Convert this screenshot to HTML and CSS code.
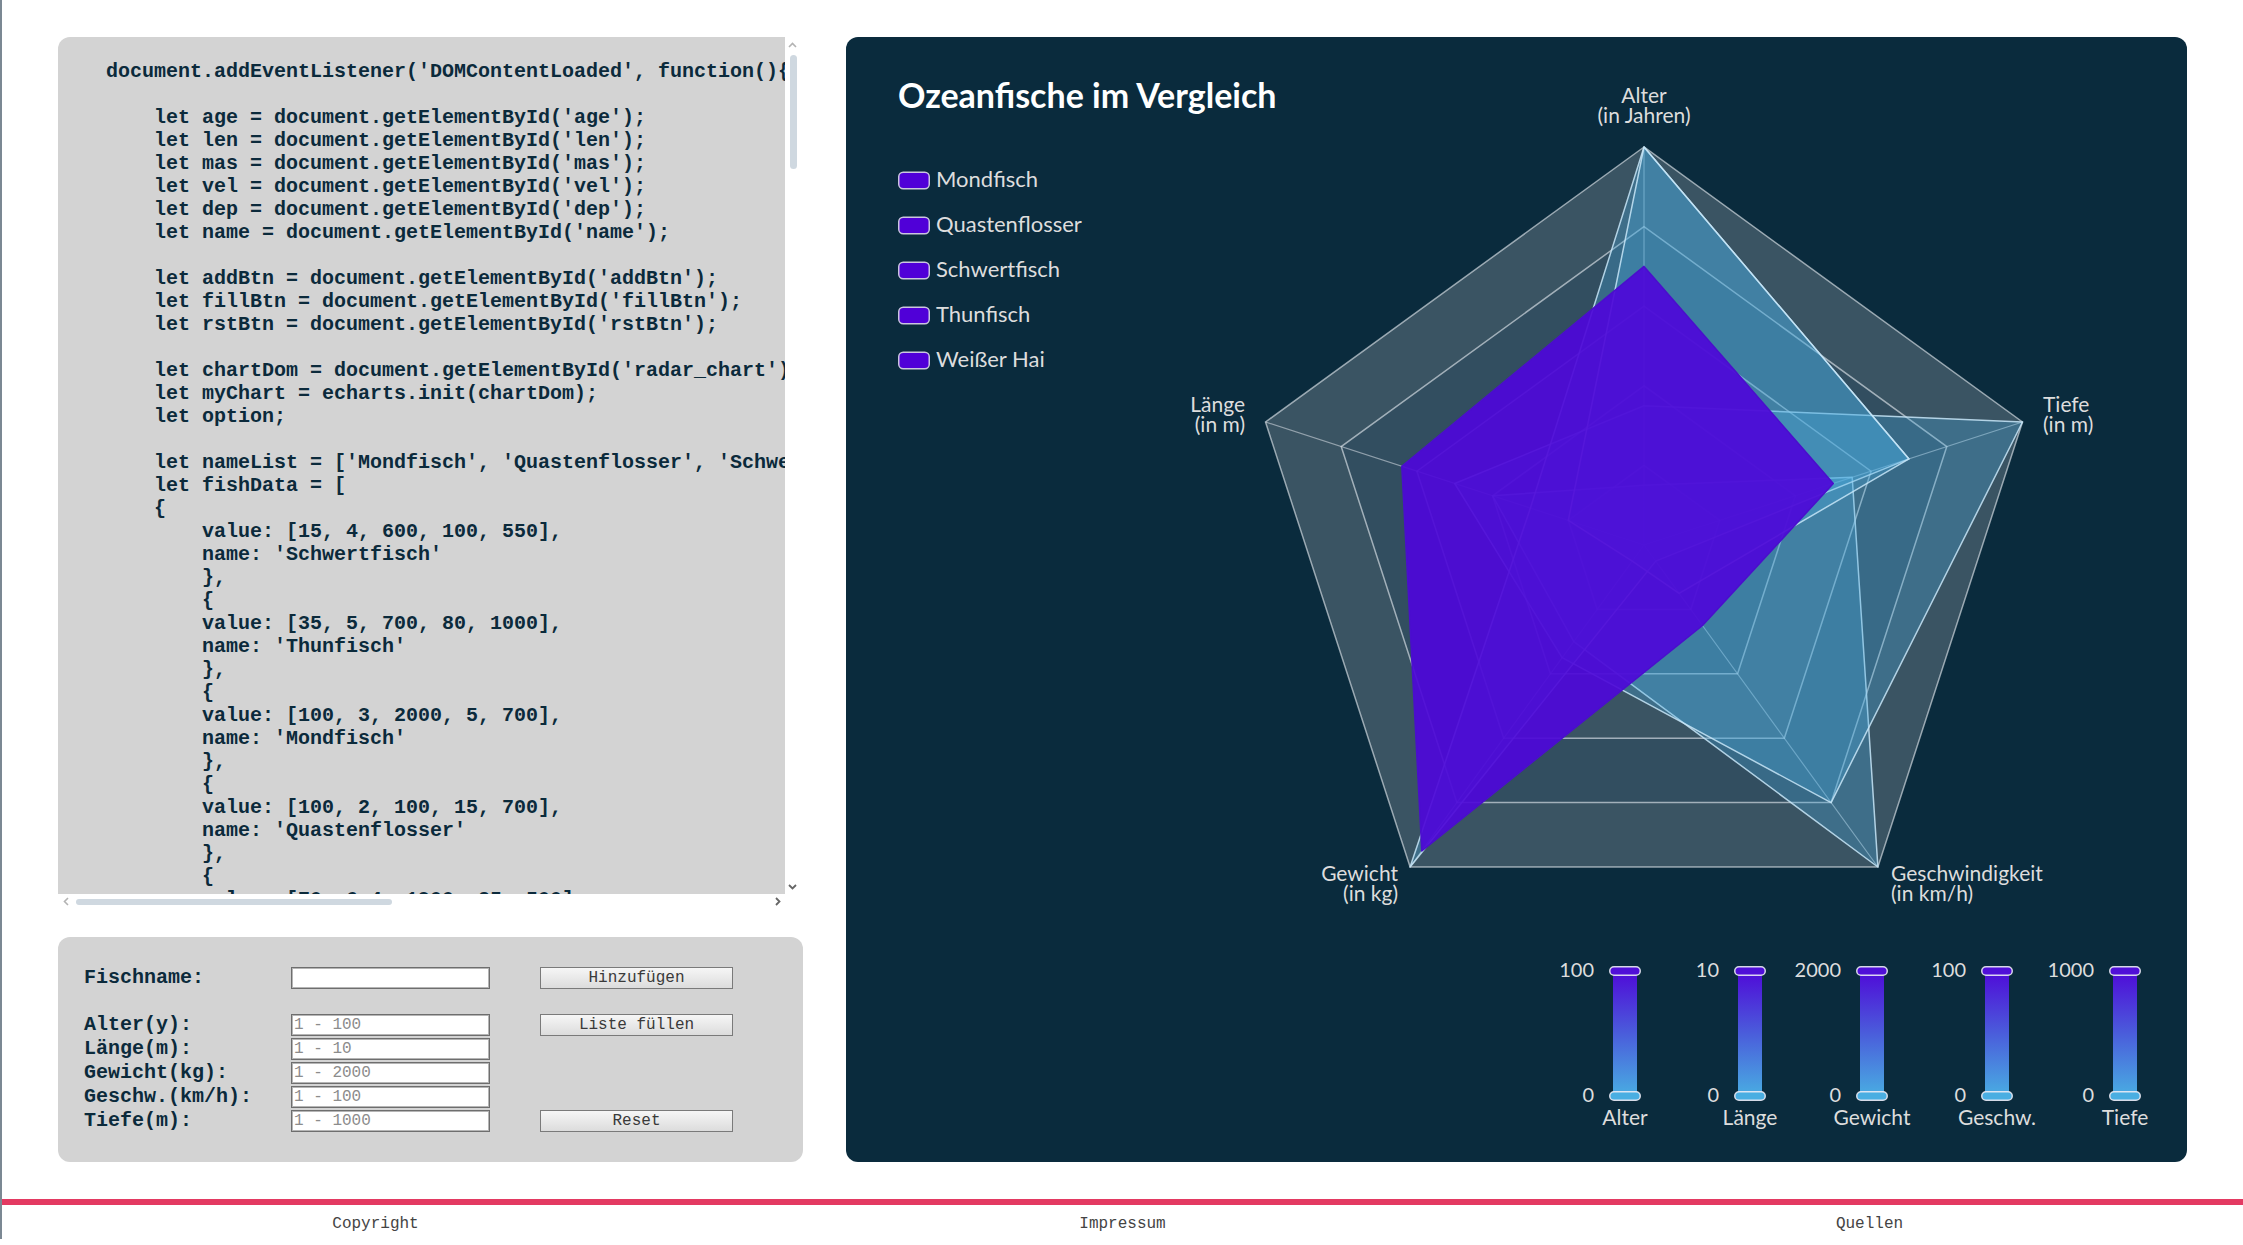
FILE: index.html
```html
<!DOCTYPE html>
<html lang="de">
<head>
<meta charset="utf-8">
<title>Ozeanfische im Vergleich</title>
<link rel="stylesheet" href="styles.css">
</head>
<body>
<main class="page">
  <section class="left-col">
    <div class="code-box">
<pre class="code">document.addEventListener('DOMContentLoaded', function(){

    let age = document.getElementById('age');
    let len = document.getElementById('len');
    let mas = document.getElementById('mas');
    let vel = document.getElementById('vel');
    let dep = document.getElementById('dep');
    let name = document.getElementById('name');

    let addBtn = document.getElementById('addBtn');
    let fillBtn = document.getElementById('fillBtn');
    let rstBtn = document.getElementById('rstBtn');

    let chartDom = document.getElementById('radar_chart');
    let myChart = echarts.init(chartDom);
    let option;

    let nameList = ['Mondfisch', 'Quastenflosser', 'Schwertfisch', 'Thunfisch', 'Weißer Hai'];
    let fishData = [
    {
        value: [15, 4, 600, 100, 550],
        name: 'Schwertfisch'
        },
        {
        value: [35, 5, 700, 80, 1000],
        name: 'Thunfisch'
        },
        {
        value: [100, 3, 2000, 5, 700],
        name: 'Mondfisch'
        },
        {
        value: [100, 2, 100, 15, 700],
        name: 'Quastenflosser'
        },
        {
        value: [70, 6.4, 1900, 25, 500],
        name: 'Weißer Hai'
        }
    ];</pre>
      <div class="vscroll">
        <span class="sb-btn"><svg width="9" height="6" viewBox="0 0 9 6"><path d="M1 5 L4.5 1.5 L8 5" fill="none" stroke="#b3b3b3" stroke-width="1.6"/></svg></span>
        <span class="vthumb"></span>
        <span class="sb-btn"><svg width="9" height="6" viewBox="0 0 9 6"><path d="M1 1 L4.5 4.5 L8 1" fill="none" stroke="#666" stroke-width="1.8"/></svg></span>
      </div>
      <div class="hscroll">
        <span class="sb-btn"><svg width="6" height="9" viewBox="0 0 6 9"><path d="M5 1 L1.5 4.5 L5 8" fill="none" stroke="#b3b3b3" stroke-width="1.6"/></svg></span>
        <span class="hthumb"></span>
        <span class="sb-btn"><svg width="6" height="9" viewBox="0 0 6 9"><path d="M1 1 L4.5 4.5 L1 8" fill="none" stroke="#666" stroke-width="1.8"/></svg></span>
      </div>
      <div class="sb-corner"></div>
    </div>

    <form class="form-box">
      <label class="lbl row1" for="name">Fischname:</label>
      <input class="inp row1" id="name" type="text">
      <button class="btn row1" type="button">Hinzufügen</button>

      <label class="lbl row3" for="age">Alter(y):</label>
      <input class="inp row3" id="age" type="text" placeholder="1 - 100">
      <button class="btn row3" type="button">Liste füllen</button>

      <label class="lbl row4" for="len">Länge(m):</label>
      <input class="inp row4" id="len" type="text" placeholder="1 - 10">

      <label class="lbl row5" for="mas">Gewicht(kg):</label>
      <input class="inp row5" id="mas" type="text" placeholder="1 - 2000">

      <label class="lbl row6" for="vel">Geschw.(km/h):</label>
      <input class="inp row6" id="vel" type="text" placeholder="1 - 100">

      <label class="lbl row7" for="dep">Tiefe(m):</label>
      <input class="inp row7" id="dep" type="text" placeholder="1 - 1000">
      <button class="btn row7" type="button">Reset</button>
    </form>
  </section>

  <section class="chart-panel" id="radar_chart">
    <svg class="chart" width="1341" height="1125" viewBox="0 0 1341 1125">
      <defs>
        <linearGradient id="vmGrad" x1="0" y1="0" x2="0" y2="1">
          <stop offset="0" stop-color="#4f0ad8"/>
          <stop offset="0.5" stop-color="#4a5ddb"/>
          <stop offset="1" stop-color="#49ade2"/>
        </linearGradient>
      </defs>

      <text class="title" x="52" y="71">Ozeanfische im Vergleich</text>

      <g class="legend">
        <rect class="swatch" x="52.75" y="135.25" width="30.5" height="16.5" rx="4.5"/>
        <text class="legend-label" x="90" y="150">Mondfisch</text>
        <rect class="swatch" x="52.75" y="180.25" width="30.5" height="16.5" rx="4.5"/>
        <text class="legend-label" x="90" y="195">Quastenflosser</text>
        <rect class="swatch" x="52.75" y="225.25" width="30.5" height="16.5" rx="4.5"/>
        <text class="legend-label" x="90" y="240">Schwertfisch</text>
        <rect class="swatch" x="52.75" y="270.25" width="30.5" height="16.5" rx="4.5"/>
        <text class="legend-label" x="90" y="285">Thunfisch</text>
        <rect class="swatch" x="52.75" y="315.25" width="30.5" height="16.5" rx="4.5"/>
        <text class="legend-label" x="90" y="330">Weißer Hai</text>
      </g>

      <g transform="translate(798 508)">
        <polygon class="band-a" points="0,-398 -378.5,-123 -233.9,322 233.9,322 378.5,-123"/>
        <polygon class="band-b" points="0,-318.4 -302.8,-98.4 -187.1,257.6 187.1,257.6 302.8,-98.4"/>
        <polygon class="band-a" points="0,-238.8 -227.1,-73.8 -140.3,193.2 140.3,193.2 227.1,-73.8"/>
        <polygon class="band-b" points="0,-159.2 -151.4,-49.2 -93.6,128.8 93.6,128.8 151.4,-49.2"/>
        <polygon class="band-a" points="0,-79.6 -75.7,-24.6 -46.8,64.4 46.8,64.4 75.7,-24.6"/>
        <path class="spoke" d="M0 0 L0 -398 M0 0 L-378.5 -123 M0 0 L-233.9 322 M0 0 L233.9 322 M0 0 L378.5 -123"/>
        <polygon class="fish-blue" points="0,-59.7 -151.4,-49.2 -70.2,96.6 233.9,322 208.2,-67.7"/>
        <polygon class="fish-blue" points="0,-139.3 -189.3,-61.5 -81.9,112.7 187.1,257.6 378.5,-123"/>
        <polygon class="fish-blue" points="0,-398 -113.6,-36.9 -233.9,322 11.7,16.1 265,-86.1"/>
        <polygon class="fish-blue" points="0,-398 -75.7,-24.6 -11.7,16.1 35.1,48.3 265,-86.1"/>
        <polygon class="fish-purple" points="0,-278.6 -242.2,-78.7 -222.2,305.9 58.5,80.5 189.3,-61.5"/>
      </g>

      <g class="axis-names">
        <text x="798" y="66" text-anchor="middle">Alter</text>
        <text x="798" y="86" text-anchor="middle">(in Jahren)</text>
        <text x="1197" y="375">Tiefe</text>
        <text x="1197" y="395">(in m)</text>
        <text x="1045" y="844">Geschwindigkeit</text>
        <text x="1045" y="864">(in km/h)</text>
        <text x="552" y="844" text-anchor="end">Gewicht</text>
        <text x="552" y="864" text-anchor="end">(in kg)</text>
        <text x="399" y="375" text-anchor="end">Länge</text>
        <text x="399" y="395" text-anchor="end">(in m)</text>
      </g>

      <g class="vmap">
        <rect class="track" x="767" y="934" width="24" height="125"/>
        <rect class="handle-top" x="763.75" y="929.75" width="30.5" height="8.5" rx="4.25"/>
        <rect class="handle-bot" x="763.75" y="1054.75" width="30.5" height="8.5" rx="4.25"/>
        <text class="vm-label" x="748" y="939.5" text-anchor="end">100</text>
        <text class="vm-label" x="748" y="1065" text-anchor="end">0</text>
        <text class="vm-name" x="779" y="1088" text-anchor="middle">Alter</text>
      </g>
      <g class="vmap">
        <rect class="track" x="892" y="934" width="24" height="125"/>
        <rect class="handle-top" x="888.75" y="929.75" width="30.5" height="8.5" rx="4.25"/>
        <rect class="handle-bot" x="888.75" y="1054.75" width="30.5" height="8.5" rx="4.25"/>
        <text class="vm-label" x="873" y="939.5" text-anchor="end">10</text>
        <text class="vm-label" x="873" y="1065" text-anchor="end">0</text>
        <text class="vm-name" x="904" y="1088" text-anchor="middle">Länge</text>
      </g>
      <g class="vmap">
        <rect class="track" x="1014" y="934" width="24" height="125"/>
        <rect class="handle-top" x="1010.75" y="929.75" width="30.5" height="8.5" rx="4.25"/>
        <rect class="handle-bot" x="1010.75" y="1054.75" width="30.5" height="8.5" rx="4.25"/>
        <text class="vm-label" x="995" y="939.5" text-anchor="end">2000</text>
        <text class="vm-label" x="995" y="1065" text-anchor="end">0</text>
        <text class="vm-name" x="1026" y="1088" text-anchor="middle">Gewicht</text>
      </g>
      <g class="vmap">
        <rect class="track" x="1139" y="934" width="24" height="125"/>
        <rect class="handle-top" x="1135.75" y="929.75" width="30.5" height="8.5" rx="4.25"/>
        <rect class="handle-bot" x="1135.75" y="1054.75" width="30.5" height="8.5" rx="4.25"/>
        <text class="vm-label" x="1120" y="939.5" text-anchor="end">100</text>
        <text class="vm-label" x="1120" y="1065" text-anchor="end">0</text>
        <text class="vm-name" x="1151" y="1088" text-anchor="middle">Geschw.</text>
      </g>
      <g class="vmap">
        <rect class="track" x="1267" y="934" width="24" height="125"/>
        <rect class="handle-top" x="1263.75" y="929.75" width="30.5" height="8.5" rx="4.25"/>
        <rect class="handle-bot" x="1263.75" y="1054.75" width="30.5" height="8.5" rx="4.25"/>
        <text class="vm-label" x="1248" y="939.5" text-anchor="end">1000</text>
        <text class="vm-label" x="1248" y="1065" text-anchor="end">0</text>
        <text class="vm-name" x="1279" y="1088" text-anchor="middle">Tiefe</text>
      </g>
    </svg>
  </section>
</main>

<footer class="footer">
  <span>Copyright</span>
  <span>Impressum</span>
  <span>Quellen</span>
</footer>
</body>
</html>
```

FILE: styles.css
```css
html, body {
  margin: 0;
  padding: 0;
  overflow: hidden;
}

body {
  background: #ffffff;
  border-left: 2px solid #7b8893;
  font-family: "Liberation Mono", "Courier New", monospace;
  color: #0b2a3b;
}

.page {
  display: flex;
  gap: 43px;
  padding: 37px 56px 37px 56px;
}

/* ---------- left column ---------- */
.left-col {
  width: 745px;
  flex: none;
  display: flex;
  flex-direction: column;
  gap: 28px;
}

.code-box {
  display: grid;
  grid-template-columns: 727px 15px;
  grid-template-rows: 857px 15px;
}

.code {
  margin: 0;
  padding: 23px 0 0 48px;
  background: #d3d3d3;
  border-top-left-radius: 12px;
  overflow: hidden;
  white-space: pre;
  font: bold 20px/23px "Liberation Mono", "Courier New", monospace;
  color: #0b2a3b;
}

.vscroll {
  display: flex;
  flex-direction: column;
  align-items: center;
  background: #ffffff;
}

.hscroll {
  display: flex;
  align-items: center;
  background: #ffffff;
}

.sb-corner {
  background: #ffffff;
}

.sb-btn {
  flex: none;
  width: 15px;
  height: 15px;
  display: flex;
  align-items: center;
  justify-content: center;
}

.vthumb {
  width: 7px;
  height: 114px;
  margin: 3px 0 auto 1px;
  border-radius: 4px;
  background: #cfd8e0;
}

.hthumb {
  width: 316px;
  height: 6px;
  margin: 0 auto 0 3px;
  border-radius: 3px;
  background: #cfd8e0;
}

/* ---------- form ---------- */
.form-box {
  display: grid;
  grid-template-columns: 207px 249px 193px;
  grid-template-rows: 22px 21px 22px 22px 22px 22px 22px;
  row-gap: 2px;
  align-content: start;
  padding: 30px 26px;
  height: 225px;
  box-sizing: border-box;
  background: #d3d3d3;
  border-radius: 12px;
}

.row1 { grid-row: 1; }
.row3 { grid-row: 3; }
.row4 { grid-row: 4; }
.row5 { grid-row: 5; }
.row6 { grid-row: 6; }
.row7 { grid-row: 7; }

.lbl {
  grid-column: 1;
  font: bold 20px/22px "Liberation Mono", "Courier New", monospace;
  color: #0b2a3b;
  white-space: nowrap;
}

.inp {
  grid-column: 2;
  width: 199px;
  height: 22px;
  box-sizing: border-box;
  margin: 0;
  padding: 1px 2px;
  border: 1px solid #6e6e6e;
  box-shadow: inset 0 0 0 1px #b5b5b5;
  background: #ffffff;
  font: 16px/18px "Liberation Mono", "Courier New", monospace;
  color: #222;
}

.inp::placeholder {
  color: #8c8c8c;
}

.btn {
  grid-column: 3;
  width: 193px;
  height: 22px;
  box-sizing: border-box;
  margin: 0;
  padding: 0;
  border: 1px solid #7a7a7a;
  background: linear-gradient(#f6f6f6, #dcdcdc);
  font: 16px/18px "Liberation Mono", "Courier New", monospace;
  color: #3a3a3a;
}

/* ---------- chart panel ---------- */
.chart-panel {
  flex: 1;
  height: 1125px;
  background: #0a2b3d;
  border-radius: 12px;
  overflow: hidden;
}

.chart {
  display: block;
  font-family: Lato, "Open Sans", sans-serif;
}

.title {
  font-size: 34px;
  font-weight: bold;
  fill: #ffffff;
}

.swatch {
  fill: #5000d8;
  stroke: #cbc5e0;
  stroke-width: 1.5;
}

.legend-label {
  font-size: 22px;
  fill: #dddddd;
}

.band-a {
  fill: #3a5463;
  stroke: rgba(235, 240, 245, 0.6);
  stroke-width: 1.5;
}

.band-b {
  fill: #324e60;
  stroke: rgba(235, 240, 245, 0.6);
  stroke-width: 1.5;
}

.spoke {
  fill: none;
  stroke: rgba(235, 240, 245, 0.5);
  stroke-width: 1.2;
}

.fish-blue {
  fill: rgba(74, 171, 224, 0.3);
  stroke: rgba(200, 230, 248, 0.85);
  stroke-width: 1.5;
  stroke-linejoin: round;
}

.fish-purple {
  fill: rgba(78, 8, 216, 0.93);
  stroke: #4a0fcc;
  stroke-width: 1.5;
  stroke-linejoin: round;
}

.axis-names text {
  font-size: 21px;
  fill: #dddddd;
}

.track {
  fill: url(#vmGrad);
}

.handle-top,
.handle-bot {
  stroke: rgba(235, 235, 245, 0.9);
  stroke-width: 1.5;
}

.handle-top {
  fill: #500fd8;
}

.handle-bot {
  fill: #4aaee2;
}

.vm-label {
  font-size: 20px;
  fill: #dddddd;
}

.vm-name {
  font-size: 21px;
  fill: #dddddd;
}

/* ---------- footer ---------- */
.footer {
  display: grid;
  grid-template-columns: 1fr 1fr 1fr;
  border-top: 6px solid #e33a62;
  padding-top: 9px;
  height: 40px;
  box-sizing: border-box;
  text-align: center;
  font: 16px/20px "Liberation Mono", "Courier New", monospace;
  color: #444;
}
```
